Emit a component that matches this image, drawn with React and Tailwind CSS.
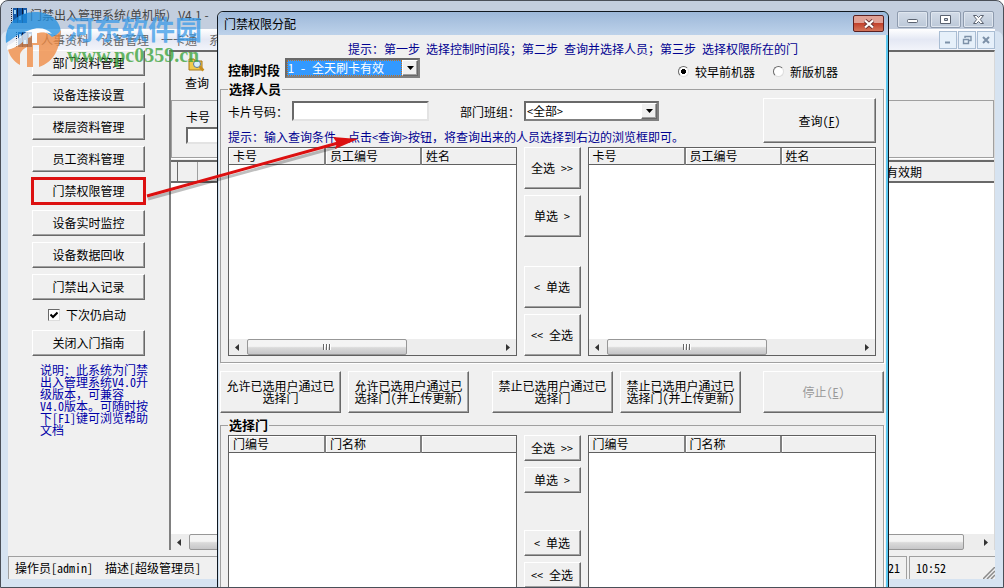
import React from "react";

const RAISED =
  "border border-t-white border-l-white border-r-[#696969] border-b-[#696969] shadow-[inset_-1px_-1px_0_#a0a0a0] bg-[#f0f0f0] text-black";
const SUNKEN = "border-2 border-t-[#696969] border-l-[#696969] border-r-[#e3e3e3] border-b-[#e3e3e3] bg-white";

function Btn({ className = "", children, ...rest }) {
  return (
    <button type="button" className={`${RAISED} text-center ${className}`} {...rest}>
      {children}
    </button>
  );
}

function Picker({ id, value, selected }) {
  return (
    <div className="flex h-5 w-[135px] border-2 border-t-[#696969] border-l-[#696969] border-r-[#808080] border-b-[#808080] bg-white">
      <select
        id={id}
        defaultValue={value}
        className={`min-w-0 flex-1 appearance-none leading-3 outline-none ${
          selected ? "border border-dotted border-[#c07020] bg-[#3399ff] text-white" : "bg-white pl-px text-black"
        }`}
      >
        <option>{value}</option>
      </select>
      <span className={`flex w-4 items-center justify-center ${RAISED}`}>
        <svg width="7" height="4" viewBox="0 0 7 4" aria-hidden="true">
          <path d="M0 0h7L3.5 4z" fill="#000" />
        </svg>
      </span>
    </div>
  );
}

function Arrow({ right }) {
  return (
    <svg width="4" height="7" viewBox="0 0 4 7" className="mx-1.5 shrink-0" aria-hidden="true">
      <path d={right ? "M0 0v7L4 3.500z" : "M4 0v7L0 3.500z"} fill="#333" />
    </svg>
  );
}

function ScrollBar({ wide }) {
  return (
    <div className="flex h-4 shrink-0 items-center bg-[#ededed]">
      <Arrow />
      <div className="flex h-full flex-1">
        <div
          className={`ml-0.5 flex h-full items-center justify-center gap-px rounded-xs border border-[#979797] bg-linear-to-b from-[#f4f4f4] from-45% via-[#dadada] via-55% to-[#c6c6c8] ${
            wide ? "mr-3.5 flex-1" : "w-40"
          }`}
        >
          <i className="h-1.5 w-0.5 border-r border-white bg-[#666]" />
          <i className="h-1.5 w-0.5 border-r border-white bg-[#666]" />
          <i className="h-1.5 w-0.5 border-r border-white bg-[#666]" />
        </div>
      </div>
      <Arrow right />
    </div>
  );
}

function ListBox({ columns, scroll }) {
  return (
    <div className="flex min-w-0 flex-1 flex-col border border-[#606060] bg-white">
      <table className="w-full table-fixed border-collapse">
        <colgroup>
          <col className="w-24" />
          <col className="w-24" />
          <col />
        </colgroup>
        <thead>
          <tr className="h-4">
            {columns.map((c, i) => (
              <th
                key={i}
                className={`h-4 border-b border-b-[#606060] bg-[#f0f0f0] pl-1 text-left leading-3 font-normal shadow-[inset_1px_1px_0_#fff] ${
                  i < 2 ? "border-r-2 border-r-[#808080]" : ""
                }`}
              >
                {c}
              </th>
            ))}
          </tr>
        </thead>
      </table>
      <div className="flex-1" />
      {scroll && <ScrollBar />}
    </div>
  );
}

function Mover({ tall }) {
  const h = tall ? "h-[42px]" : "h-[26px]";
  return (
    <div className="flex w-[57px] shrink-0 flex-col gap-1.5">
      <Btn className={h}>{"全选 >>"}</Btn>
      <Btn className={h}>{"单选 >"}</Btn>
      <div className="flex-1" />
      <Btn className={h}>{"< 单选"}</Btn>
      <Btn className={h}>{"<< 全选"}</Btn>
    </div>
  );
}

function AppIcon() {
  return (
    <svg width="17" height="15" viewBox="0 0 17 15" aria-hidden="true">
      <path d="M0.500 0v15" stroke="#223" strokeDasharray="1 1" />
      <path d="M2 0h4v15H2zM7 0h4v15H7zM12 0h4v15h-4z" fill="#1459a8" />
      <path d="M3 2h2v4H3zM8 8h2v4H8zM13 2h2v4h-2z" fill="#9ed4f5" />
      <path d="M6.500 0v15M11.500 0v15" stroke="#0b1c3c" />
    </svg>
  );
}

function Caption({ label, children }) {
  return (
    <button
      type="button"
      aria-label={label}
      className="flex h-[17px] w-[31px] items-center justify-center rounded-xs border border-[#8e9bae] bg-linear-to-b from-[#d3dce8] to-[#bcc8d8] shadow-[inset_0_0_0_1px_#dfe6ef]"
    >
      <svg width="13" height="11" viewBox="0 0 13 11" fill="#fff" stroke="#5a6270" aria-hidden="true">
        {children}
      </svg>
    </button>
  );
}

function MdiButton({ label, children }) {
  return (
    <button
      type="button"
      aria-label={label}
      className="flex h-[18px] w-[18px] items-center justify-center border border-[#a9bdd3] bg-[#e6f0fa]"
    >
      <svg width="10" height="10" viewBox="0 0 10 10" fill="none" stroke="#7d91a8" aria-hidden="true">
        {children}
      </svg>
    </button>
  );
}

const NAV = [
  "部门资料管理",
  "设备连接设置",
  "楼层资料管理",
  "员工资料管理",
  "门禁权限管理",
  "设备实时监控",
  "设备数据回收",
  "门禁出入记录",
];

function Sidebar() {
  return (
    <nav className="flex w-[161px] shrink-0 flex-col items-start pl-6">
      <div className="flex flex-col gap-1.5">
        {NAV.map((n) => (
          <Btn
            key={n}
            className={`h-[26px] w-[113px] ${n === "门禁权限管理" ? "outline-3 -outline-offset-2 outline-[#dc1010]" : ""}`}
          >
            {n}
          </Btn>
        ))}
      </div>
      <label className="flex h-[30px] items-center gap-1.5 pl-4">
        <input type="checkbox" defaultChecked className="sr-only" />
        <span className="flex size-3 items-center justify-center border border-t-[#696969] border-l-[#696969] border-r-[#ddd] border-b-[#ddd] bg-white">
          <svg width="8" height="8" viewBox="0 0 8 8" fill="none" stroke="#000" strokeWidth="2" aria-hidden="true">
            <path d="M0.500 3.500L3 6l4.500-4.500" />
          </svg>
        </span>
        下次仍启动
      </label>
      <Btn className="h-[26px] w-[113px]">关闭入门指南</Btn>
      <p className="mt-2 ml-2 w-[110px] leading-3 text-[#0000a8]">
        说明：此系统为门禁
        <br />
        出入管理系统V4.0升
        <br />
        级版本，可兼容
        <br />
        V4.0版本。可随时按
        <br />
        下[F1]键可浏览帮助
        <br />
        文档
      </p>
    </nav>
  );
}

function Records() {
  return (
    <main className="mb-1.5 flex min-w-0 flex-1 flex-col border-t-2 border-r border-l-2 border-t-[#696969] border-r-[#d8d8d8] border-l-[#808080]">
      <div className="flex h-12 shrink-0 pl-3">
        <button type="button" className="flex w-7 flex-col items-center gap-1 pt-1">
          <svg width="18" height="17" viewBox="0 0 18 17" aria-hidden="true">
            <path d="M1 3h5l1 2h7v9H1z" fill="#f2c94c" stroke="#a8791a" />
            <circle cx="9" cy="8" r="3.500" fill="#d9eefc" stroke="#5b7894" />
            <path d="M11.500 10.500l4 4" stroke="#c98e1c" strokeWidth="2.500" />
          </svg>
          <span className="leading-3">查询</span>
        </button>
      </div>
      <section className="flex h-[58px] shrink-0 flex-col items-start gap-1 border border-[#a0a0a0] pt-2.5 pl-3.5 shadow-[0_1px_0_#fff]">
        <label htmlFor="card" className="leading-3">
          卡号
        </label>
        <input id="card" className={`h-[17px] w-28 ${SUNKEN}`} />
      </section>
      <div className="mt-0.5 flex flex-1 flex-col border-t-2 border-[#696969] bg-white">
        <table className="w-full table-fixed border-collapse">
          <colgroup>
            <col className="w-1.5" />
            <col className="w-5" />
            <col />
            <col className="w-[108px]" />
          </colgroup>
          <thead>
            <tr className="h-5 border-b-2 border-[#696969] bg-[#f0f0f0]">
              <th className="border-r border-[#696969]" />
              <th className="border-r border-[#a0a0a0]" />
              <th />
              <th className="text-left leading-3 font-normal">有效期</th>
            </tr>
          </thead>
        </table>
        <div className="flex-1" />
        <ScrollBar wide />
      </div>
    </main>
  );
}

function Dialog() {
  return (
    <div
      role="dialog"
      aria-label="门禁权限分配"
      className="absolute top-2.5 left-[216px] flex h-[600px] w-[672px] flex-col rounded-t-md border border-[#101820] bg-[#f0f0f0] shadow-[inset_-2px_0_0_#5cc8f0,inset_1px_0_0_#cfe0f0]"
    >
      <header className="flex h-[23px] shrink-0 items-center justify-between rounded-t-md bg-linear-to-b from-[#9db8d9] to-[#bdd2ea] pr-1 pl-1.5">
        <h1>门禁权限分配</h1>
        <button
          type="button"
          aria-label="关闭"
          className="flex h-[17px] w-[31px] items-center justify-center rounded-xs border border-[#5a2020] bg-linear-to-b from-[#e0a196] from-45% via-[#c2412c] via-50% to-[#d4745a]"
        >
          <svg width="12" height="10" viewBox="0 0 12 10" aria-hidden="true">
            <path d="M2 1.500l8 7M10 1.500l-8 7" stroke="#6b3434" strokeWidth="4" />
            <path d="M2 1.500l8 7M10 1.500l-8 7" stroke="#fff" strokeWidth="2.200" />
          </svg>
        </button>
      </header>

      <div className="flex flex-1 flex-col pr-1 pl-0.5">
        <p className="pt-2 pl-32 leading-3 text-[#000090]">
          提示：第一步 选择控制时间段；第二步 查询并选择人员；第三步 选择权限所在的门
        </p>
        <div className="mt-0.5 flex h-[25px] items-center pl-2">
          <label htmlFor="period" className="w-[57px] text-[13px] leading-[13px] font-bold">
            控制时段
          </label>
          <div className="pb-1">
            <Picker id="period" value="1 - 全天刷卡有效" selected />
          </div>
          <div className="ml-auto flex gap-[18px] pt-1 pr-[46px]">
            {["较早前机器", "新版机器"].map((t, i) => (
              <label key={t} className="flex items-center gap-1.5 leading-3">
                <input
                  type="radio"
                  name="machine"
                  defaultChecked={i === 0}
                  className="size-[11px] appearance-none rounded-full border border-t-[#696969] border-l-[#696969] border-r-[#ddd] border-b-[#ddd] bg-white checked:bg-radial checked:from-black checked:from-35% checked:to-white checked:to-40%"
                />
                {t}
              </label>
            ))}
          </div>
        </div>

        <fieldset className="h-[281px] min-w-0 border border-[#a0a0a0] px-[7px] shadow-[1px_1px_0_#fff]">
          <legend className="h-[14px] px-px text-[13px] leading-[14px] font-bold">选择人员</legend>
          <div className="mt-0.5 flex h-[45px] items-start">
            <label htmlFor="cardno" className="w-16 pt-2 leading-3">
              卡片号码：
            </label>
            <input id="cardno" className={`mt-[3px] h-5 w-[137px] ${SUNKEN}`} />
            <label htmlFor="dept" className="ml-[31px] w-16 pt-2 leading-3">
              部门班组：
            </label>
            <div className="mt-[3px]">
              <Picker id="dept" value="<全部>" />
            </div>
            <Btn className="ml-auto h-[45px] w-[113px]">
              查询(<u>F</u>)
            </Btn>
          </div>
          <p className="h-1 -translate-y-3 leading-3 text-[#000090]">
            提示：输入查询条件，点击&lt;查询&gt;按钮，将查询出来的人员选择到右边的浏览框即可。
          </p>
          <div className="flex h-[209px] gap-[7px]">
            <ListBox columns={["卡号", "员工编号", "姓名"]} scroll />
            <Mover tall />
            <ListBox columns={["卡号", "员工编号", "姓名"]} scroll />
          </div>
        </fieldset>

        <div className="mt-2 flex gap-[7px] leading-3">
          <Btn className="h-[42px] w-[121px]">
            允许已选用户通过已
            <br />
            选择门
          </Btn>
          <Btn className="h-[42px] w-[121px]">
            允许已选用户通过已
            <br />
            选择门(并上传更新)
          </Btn>
          <Btn className="ml-4 h-[42px] w-[121px]">
            禁止已选用户通过已
            <br />
            选择门
          </Btn>
          <Btn className="h-[42px] w-[121px]">
            禁止已选用户通过已
            <br />
            选择门(并上传更新)
          </Btn>
          <Btn className="ml-auto h-[42px] w-[121px]" disabled>
            <span className="text-[#9a9a9a]">
              停止(<u>E</u>)
            </span>
          </Btn>
        </div>

        <fieldset className="mt-[5px] min-w-0 border border-[#a0a0a0] px-[7px] pb-2 shadow-[1px_1px_0_#fff]">
          <legend className="h-[14px] px-px text-[13px] leading-[14px] font-bold">选择门</legend>
          <div className="mt-[3px] flex h-[153px] gap-[7px]">
            <ListBox columns={["门编号", "门名称", ""]} />
            <Mover />
            <ListBox columns={["门编号", "门名称", ""]} />
          </div>
        </fieldset>
      </div>
    </div>
  );
}

function Watermark() {
  return (
    <div className="pointer-events-none absolute top-2.5 left-1 flex items-start opacity-75">
      <svg width="60" height="60" viewBox="0 0 60 60" aria-hidden="true">
        <path d="M1 32C-1 14 12 1 30 1c15 0 26 8 26 22-2 7-5 9-9 11 1-8-4-14-12-15C20 17 12 25 1 32z" fill="#1f8fe0" />
        <path d="M3 38c8-1 14-7 20-12 8-6 18-7 24 0 3-1 6-3 9-7-1 19-7 32-22 37V34h-6v22h-6V36c-5 3-7 5-7 9v9C8 50 4 44 3 38z" fill="#f0873c" />
        <path d="M2 35c9-4 14-12 23-16 8-3 17-2 22 4-7-3-15-2-21 2-7 5-14 12-24 14z" fill="#fff" />
        <path d="M18 25h5v8h-5zM27 20h5v12h-5z" fill="#fff" />
      </svg>
      <div className="flex flex-col pt-1 pl-0.5">
        <span className="font-['Noto_Sans_CJK_SC',sans-serif] text-[27px] leading-7 font-bold text-[#3b9be8]">河东软件园</span>
        <span className="font-['Liberation_Serif',serif] text-[20px] leading-6 font-bold text-[#35a035]">www.pc0359.cn</span>
      </div>
    </div>
  );
}

export default function App() {
  return (
    <div className="relative flex h-screen flex-col overflow-hidden rounded-t-lg border border-[#4a4f58] bg-[#d6e3f1] pr-2 pb-2 pl-[7px] font-['Noto_Sans_Mono_CJK_SC','Noto_Sans_CJK_SC',sans-serif] text-[12px] leading-4 text-black shadow-[inset_0_30px_0_#c3cede]">
      <header className="flex h-7 shrink-0 items-center gap-0.5 bg-[#c3cede] pr-px pl-[3px]">
        <AppIcon />
        <span className="font-['Noto_Sans_CJK_SC',sans-serif] whitespace-pre text-[#444]">
          {"门禁出入管理系统(单机版)   V4.1 -"}
        </span>
        <div className="ml-auto flex gap-0.5 pt-2">
          <Caption label="最小化">
            <rect x="1.500" y="5.500" width="10" height="3" rx="1" />
          </Caption>
          <Caption label="最大化">
            <path d="M1.500 1.500h10v8h-10zM5.500 4.500v2h3v-2z" fillRule="evenodd" />
          </Caption>
          <Caption label="关闭">
            <path d="M1.500 1.500h3l2 2 2-2h3l-3.200 4 3.200 4h-3l-2-2-2 2h-3l3.200-4z" />
          </Caption>
        </div>
      </header>
      <div className="flex h-[21px] shrink-0 items-center bg-linear-to-b from-white via-[#e4e8f4] to-[#f2f4fa] pl-2">
        <AppIcon />
        <div className="flex gap-3 pl-2 font-['Noto_Sans_CJK_SC',sans-serif] text-[#666]">
          <button type="button">人事资料</button>
          <button type="button">设备管理</button>
          <button type="button">一卡通</button>
          <button type="button">系统</button>
        </div>
        <div className="ml-auto flex gap-px">
          <MdiButton label="最小化子窗口">
            <path d="M2 7.500h5" strokeWidth="2" />
          </MdiButton>
          <MdiButton label="还原子窗口">
            <path d="M3 3V1.500h6v4H7M1.500 4.500h5v4h-5z" strokeWidth="1.400" />
          </MdiButton>
          <MdiButton label="关闭子窗口">
            <path d="M2 2l6 6M8 2L2 8" strokeWidth="2" />
          </MdiButton>
        </div>
      </div>
      <div className="flex min-h-0 flex-1 bg-[#f0f0f0]">
        <Sidebar />
        <Records />
      </div>
      <footer className="flex h-[23px] shrink-0 items-center gap-0.5 bg-[#f0f0f0]">
        <div className="flex h-full flex-1 items-center border-t border-l border-[#a0a0a0] pl-1.5 whitespace-pre">
          操作员[admin]  描述[超级管理员]
        </div>
        <div className="flex h-full w-24 items-center justify-end border-t border-r border-[#a0a0a0] pr-1.5">21</div>
        <div className="flex h-full w-[86px] items-center justify-between border-t border-l border-[#a0a0a0] pl-1.5">
          10:52
          <svg width="12" height="12" viewBox="0 0 12 12" stroke="#8a8a8a" className="self-end" aria-hidden="true">
            <path d="M0 12L12 0M4 12l8-8M8 12l4-4" strokeWidth="1.500" />
          </svg>
        </div>
      </footer>

      <Dialog />
      <Watermark />
      <svg
        width="230"
        height="80"
        viewBox="0 0 230 80"
        className="pointer-events-none absolute top-[129px] left-[139px]"
        aria-hidden="true"
      >
        <path d="M8 69L197 17" stroke="#000" strokeOpacity="0.250" strokeWidth="3" />
        <path d="M7 66L198 13" stroke="#dc1010" strokeWidth="3" />
        <path d="M218 9L193 7l4 6-2 6z" fill="#dc1010" />
      </svg>
    </div>
  );
}
